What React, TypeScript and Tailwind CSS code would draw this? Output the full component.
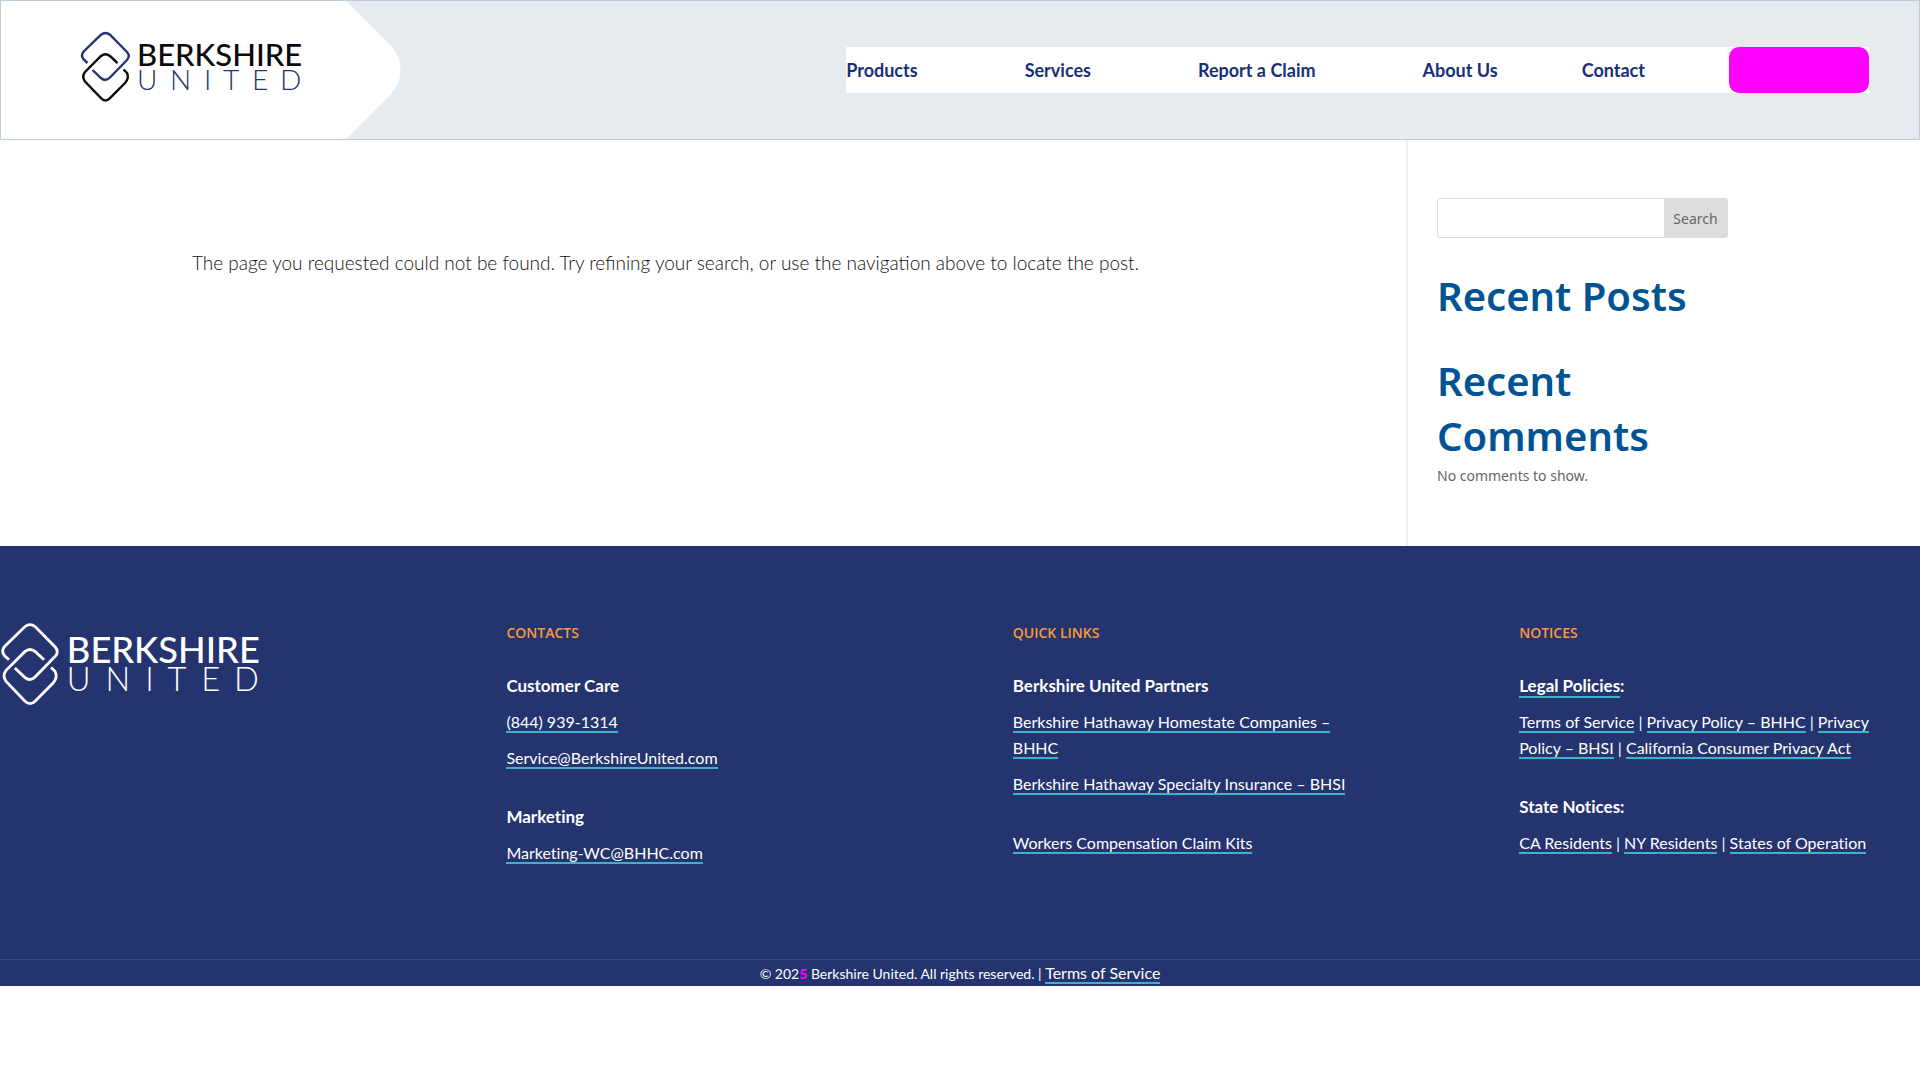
import type { ReactNode } from "react";

type LogoProps = { className: string; primary: string; secondary: string };

function Logo({ className, primary, secondary }: LogoProps) {
  return (
    <svg viewBox="0 0 220 71" className={className} role="img" aria-label="Berkshire United">
      <g fill="none" strokeWidth="2.4">
        <path
          stroke={secondary}
          d="M6.5 31.5 L2.700 28 Q-0.6 24 2.700 20 L20 3.2 Q24.500 -0.4 29 3.200 L46 20.500 Q49.500 24.500 46 28.500 L29 46 Q24.500 50.500 20 46.500 L11.500 38.500"
        />
        <path
          stroke={primary}
          d="M36.500 31.500 L29 24.500 Q24.500 20.800 20 24.500 L4 40.500 Q0.500 45 4 50 L20 66.700 Q24.500 71.300 29 66.700 L44 51.500 Q48.500 46.500 46 41.500 L42.500 38"
        />
      </g>
      <g fontFamily="Lato, sans-serif">
        <text x="56" y="34.500" fontSize="31" fontWeight="500" fill={primary}>
          BERKSHIRE
        </text>
        <text x="56 89 123 142 171 199" y="58.500" fontSize="28" fontWeight="300" fill={secondary}>
          UNITED
        </text>
      </g>
    </svg>
  );
}

function FooterLink({ children }: { children: ReactNode }) {
  return (
    <a href="#" className="border-b-2 border-[#3db2c8]">
      {children}
    </a>
  );
}

function FooterColumn({ title, children }: { title: string; children: ReactNode }) {
  return (
    <section>
      <h4 className="mb-[30px] font-['Open_Sans',sans-serif] text-sm leading-5 font-semibold text-[#f7993d]">{title}</h4>
      <div className="flex flex-col gap-[33px]">{children}</div>
    </section>
  );
}

function Group({ children }: { children: ReactNode }) {
  return <div className="flex flex-col gap-2.5">{children}</div>;
}

function Strong({ children }: { children: ReactNode }) {
  return <strong className="text-[17px] leading-[26px] font-bold">{children}</strong>;
}

const menus = ["Products", "Services", "Report a Claim"];

export default function App() {
  return (
    <div className="min-h-screen bg-white font-['Lato',sans-serif] [font-variant-ligatures:no-common-ligatures]">
      <header className="flex h-[140px] items-center justify-between border border-[#bfcdd8] bg-[#e6ebef]">
        <div className="flex h-full">
          <div className="w-[345px] bg-white pt-[30px] pl-20">
            <a href="#" className="block">
              <Logo className="h-[72px] w-[220px] overflow-visible" primary="#0a0a0a" secondary="#24346e" />
            </a>
          </div>
          <svg viewBox="0 0 55 138" className="h-full w-[55px] overflow-hidden" aria-hidden="true">
            <path fill="#fff" d="M-1 0 H0 L45 45 Q54.500 55 54.500 69 Q54.500 83 45 93 L0 138 H-1 Z" />
          </svg>
        </div>
        <nav className="mr-[50px] flex h-[46px] items-center bg-white text-lg font-bold text-[#17307a]">
          {menus.map((m) => (
            <a key={m} href="#" className="mr-[107px]">
              {m}
            </a>
          ))}
          <a href="#" className="mr-[84px]">
            About Us
          </a>
          <a href="#" className="mr-[84px]">
            Contact
          </a>
          <button type="button" aria-label="Login" className="h-full w-[140px] rounded-[10px] bg-[#ff00ff]" />
        </nav>
      </header>

      <main className="flex h-[406px] justify-between pl-48">
        <p className="pt-[107px] text-[19px] leading-8 font-light text-[#111] [font-variant-ligatures:normal]">
          The page you requested could not be found. Try refining your search, or use the navigation above to locate the post.
        </p>
        <aside className="mr-48 w-[322px] shrink-0 border-l-2 border-[#f0f0f0] pt-[58px] pl-[29px] font-['Noto_Sans',sans-serif] text-[#666]">
          <form className="mb-[30px] flex h-10 overflow-hidden rounded-[3px] border border-[#ddd]">
            <input type="text" aria-label="Search for" className="min-w-0 flex-1 px-2 text-sm outline-none" />
            <button type="button" className="w-[63px] bg-[#ddd] pt-0.5 text-sm">
              Search
            </button>
          </form>
          <h2 className="mb-[30px] text-[40px] leading-[55px] font-semibold text-[#005493]">Recent Posts</h2>
          <h2 className="text-[40px] leading-[55px] font-semibold text-[#005493]">Recent Comments</h2>
          <p className="text-sm leading-[26px]">No comments to show.</p>
        </aside>
      </main>

      <footer className="bg-[#24346e] text-white">
        <div className="grid h-[413px] grid-cols-4 gap-x-[5.5%] pt-[77px] text-base leading-[26px]">
          <a href="#">
            <Logo className="h-[83px] w-[260px] overflow-visible" primary="#fff" secondary="#fff" />
          </a>
          <FooterColumn title="CONTACTS">
            <Group>
              <Strong>Customer Care</Strong>
              <p><FooterLink>(844) 939-1314</FooterLink></p>
              <p><FooterLink>Service@BerkshireUnited.com</FooterLink></p>
            </Group>
            <Group>
              <Strong>Marketing</Strong>
              <p><FooterLink>Marketing-WC@BHHC.com</FooterLink></p>
            </Group>
          </FooterColumn>
          <FooterColumn title="QUICK LINKS">
            <Group>
              <Strong>Berkshire United Partners</Strong>
              <p><FooterLink>Berkshire Hathaway Homestate Companies –<br />BHHC</FooterLink></p>
              <p><FooterLink>Berkshire Hathaway Specialty Insurance – BHSI</FooterLink></p>
            </Group>
            <p><FooterLink>Workers Compensation Claim Kits</FooterLink></p>
          </FooterColumn>
          <FooterColumn title="NOTICES">
            <Group>
              <Strong><FooterLink>Legal Policies</FooterLink>:</Strong>
              <p>
                <FooterLink>Terms of Service</FooterLink> | <FooterLink>Privacy Policy – BHHC</FooterLink> |{" "}
                <FooterLink>Privacy<br />Policy – BHSI</FooterLink> | <FooterLink>California Consumer Privacy Act</FooterLink>
              </p>
            </Group>
            <Group>
              <Strong>State Notices:</Strong>
              <p>
                <FooterLink>CA Residents</FooterLink> | <FooterLink>NY Residents</FooterLink> |{" "}
                <FooterLink>States of Operation</FooterLink>
              </p>
            </Group>
          </FooterColumn>
        </div>
        <p className="border-t border-[#3a4a80] text-center text-sm leading-[25px]">
          © 202<span className="font-black text-[#ff00ff]">5</span> Berkshire United. All rights reserved. |{" "}
          <span className="text-base leading-[25px]"><FooterLink>Terms of Service</FooterLink></span>
        </p>
      </footer>
    </div>
  );
}
